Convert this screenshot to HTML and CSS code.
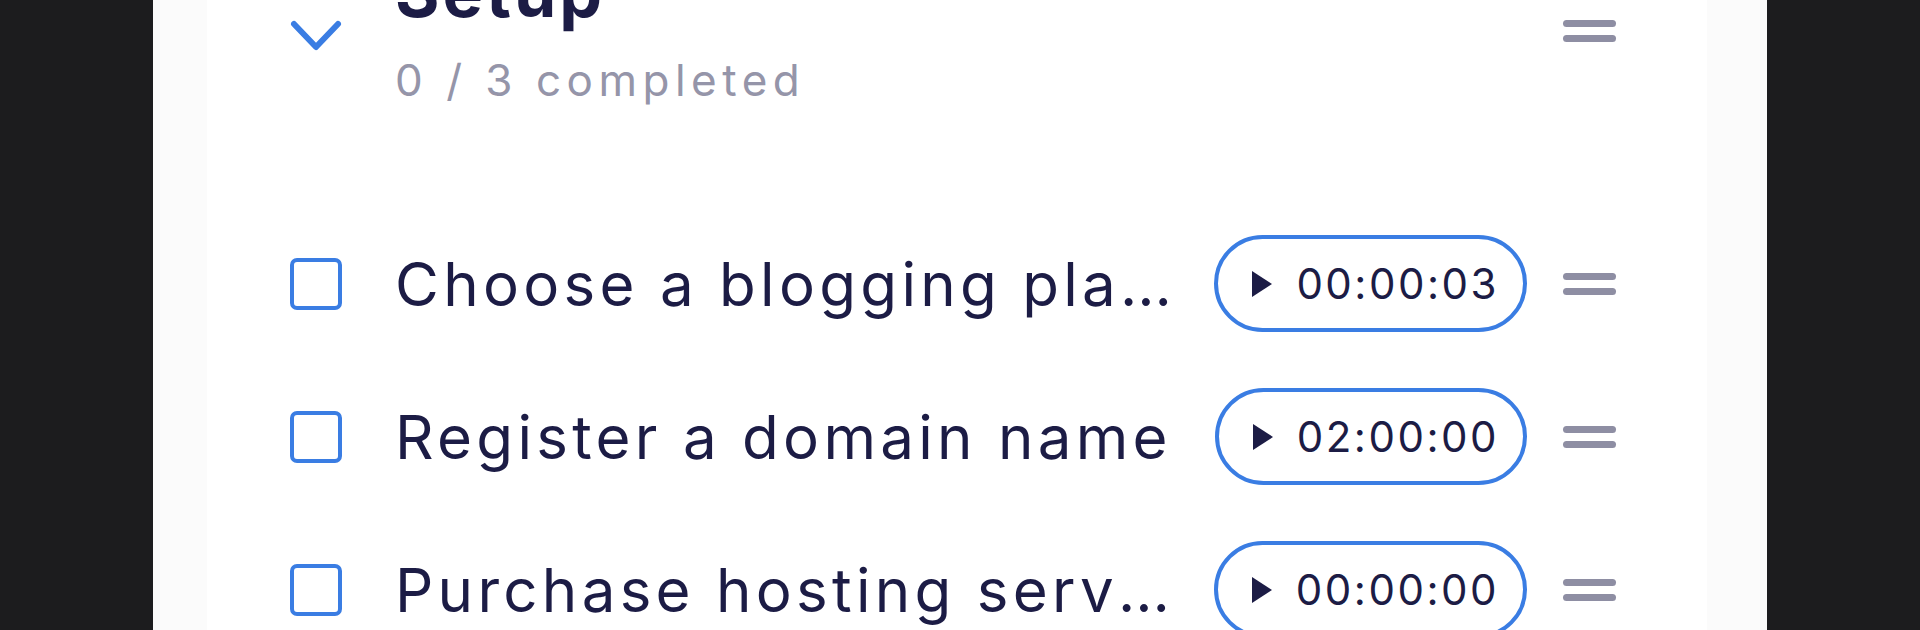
FILE: index.html
```html
<!DOCTYPE html>
<html lang="en">
  <head>
    <meta charset="utf-8">
    <title>Checklist</title>
    <link rel="stylesheet" href="styles.css">
  </head>
  <body>
    <div class="Screen">
      <div class="Card">
        <div class="Header">
          <div class="Toggle">
            <svg width="52" height="32" viewBox="0 0 52 32">
              <path d="M4 4 L26 27 L48 4" fill="none" stroke="#3a7de3" stroke-width="6" stroke-linecap="round" stroke-linejoin="round"/>
            </svg>
          </div>
          <div class="HeadText">
            <h2 class="Title">Setup</h2>
            <div class="Progress">0 / 3 completed</div>
          </div>
          <div class="Handle"><span></span><span></span></div>
        </div>

        <div class="TaskList">
          <div class="Task">
            <span class="Check"></span>
            <span class="TaskName">Choose a blogging platform</span>
            <span class="Timer"><i class="Play"></i>00:00:03</span>
            <div class="Handle"><span></span><span></span></div>
          </div>
          <div class="Task">
            <span class="Check"></span>
            <span class="TaskName">Register a domain name</span>
            <span class="Timer"><i class="Play"></i>02:00:00</span>
            <div class="Handle"><span></span><span></span></div>
          </div>
          <div class="Task">
            <span class="Check"></span>
            <span class="TaskName">Purchase hosting services</span>
            <span class="Timer"><i class="Play"></i>00:00:00</span>
            <div class="Handle"><span></span><span></span></div>
          </div>
        </div>
      </div>
    </div>
  </body>
</html>
```

FILE: styles.css
```css
* {
  margin: 0;
  padding: 0;
  box-sizing: border-box;
}

html, body {
  height: 100%;
  overflow: hidden;
}

body {
  background: #1c1c1e;
  font-family: Inter, "Noto Sans", sans-serif;
  color: #1c1c45;
}

.Screen {
  width: 1614px;
  height: 630px;
  margin-left: 153px;
  padding: 0 60px 0 54px;
  background: #fbfbfb;
  overflow: hidden;
}

.Card {
  display: flow-root;
  height: 100%;
  padding: 0 91px 0 83px;
  background: #fff;
}

.Header {
  display: flex;
  align-items: flex-start;
  margin-top: -48px;
}

.Toggle {
  width: 52px;
  margin-top: 68px;
  line-height: 0;
}

.HeadText {
  flex: 1;
  margin-left: 53px;
}

.Title {
  font-size: 68px;
  line-height: 80px;
  font-weight: 700;
  letter-spacing: 3px;
}

.Progress {
  margin-top: 20px;
  font-size: 44px;
  line-height: 56px;
  color: #9595a9;
  letter-spacing: 5.5px;
}

.Header .Handle {
  margin-top: 68px;
}

.Handle {
  display: flex;
  flex-direction: column;
  gap: 8px;
  width: 53px;
  flex-shrink: 0;
}

.Handle span {
  display: block;
  height: 7px;
  border-radius: 4px;
  background: #8e8ea3;
}

.TaskList {
  margin-top: 99px;
}

.Task {
  display: flex;
  align-items: center;
  height: 153px;
}

.Check {
  width: 52px;
  height: 52px;
  flex-shrink: 0;
  border: 4px solid #3a7de3;
  border-radius: 7px;
}

.TaskName {
  flex: 1;
  min-width: 0;
  margin: 0 32px 0 53px;
  font-size: 60px;
  letter-spacing: 4.3px;
  white-space: nowrap;
  overflow: hidden;
  text-overflow: ellipsis;
}

.Timer {
  display: flex;
  align-items: center;
  flex-shrink: 0;
  height: 97px;
  padding: 0 24px 0 34px;
  border: 4px solid #3a7de3;
  border-radius: 50px;
  font-size: 42px;
  letter-spacing: 2.5px;
}

.Play {
  width: 0;
  height: 0;
  margin-right: 24px;
  border-top: 13px solid transparent;
  border-bottom: 13px solid transparent;
  border-left: 20px solid #1c1c45;
}

.Task .Handle {
  margin-left: 36px;
}
```
